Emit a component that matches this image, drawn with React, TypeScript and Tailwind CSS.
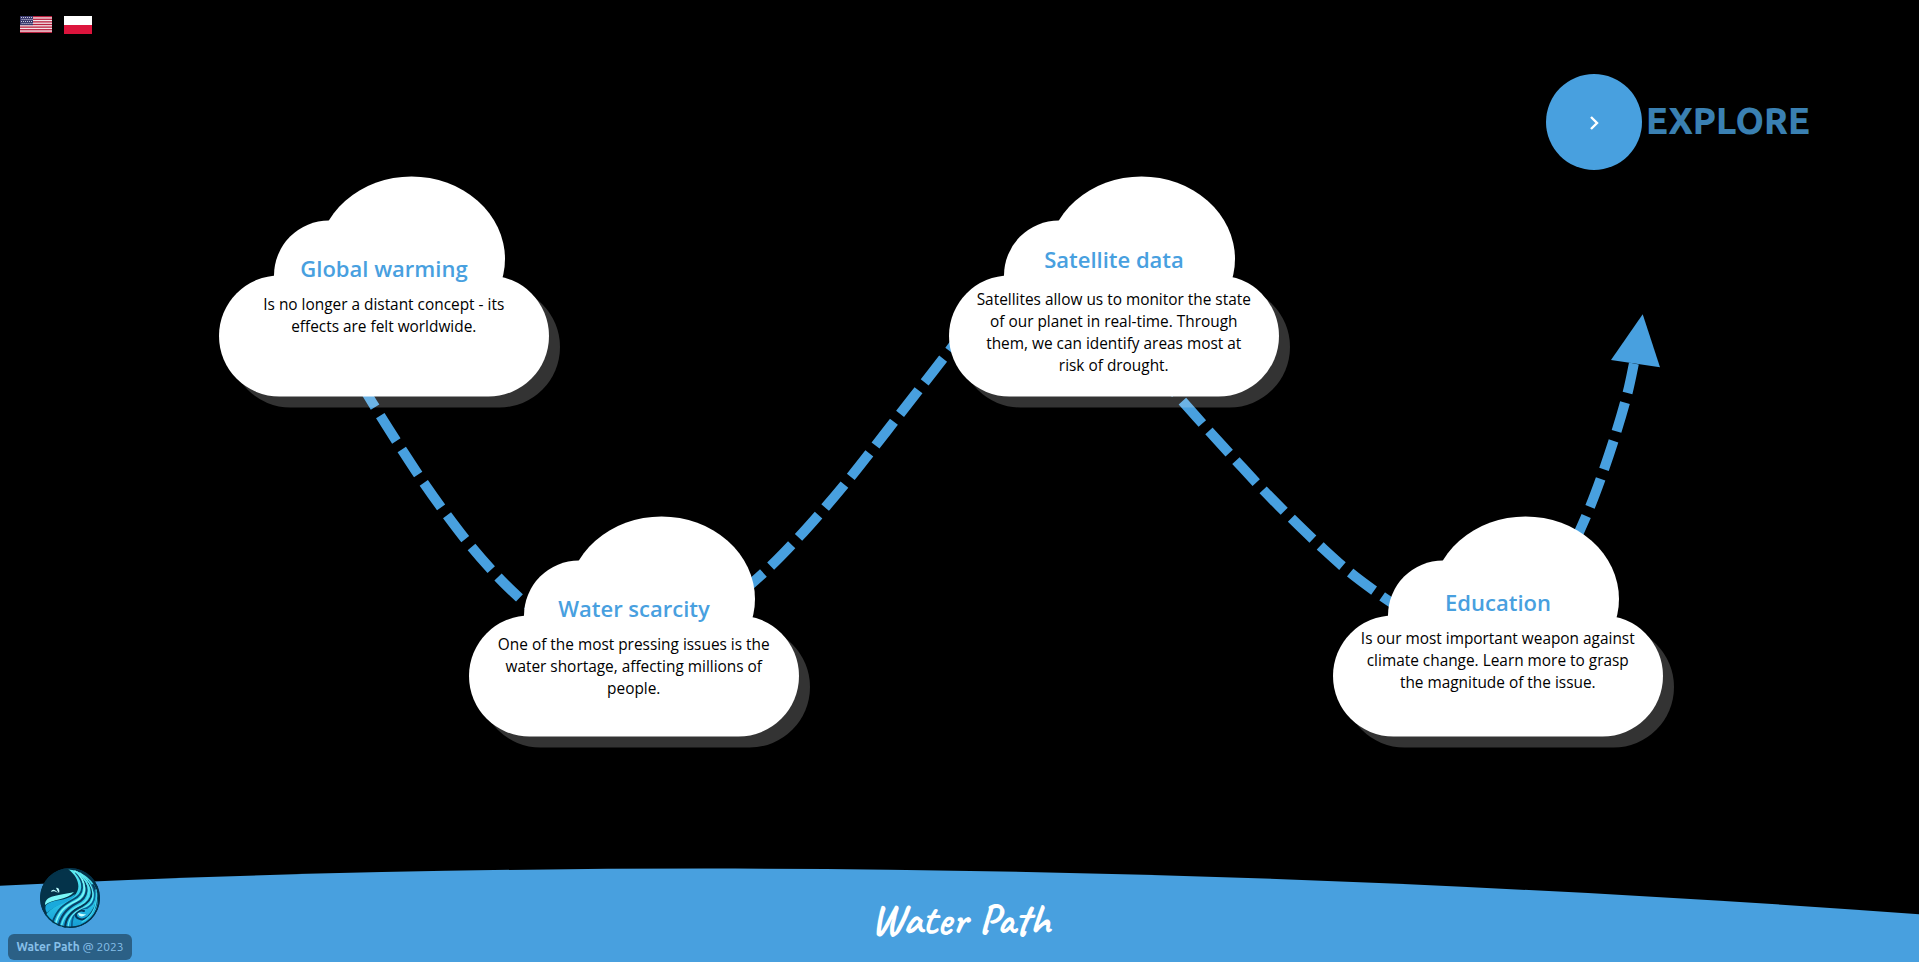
import React from "react";
import { ChevronRight } from "lucide-react";

type Point = [number, number];

/* Catmull-Rom spline through the given points, as an SVG path. */
function smoothPath(points: Point[]): string {
  let d = `M${points[0][0]},${points[0][1]}`;
  for (let i = 0; i < points.length - 1; i++) {
    const p0 = points[i - 1] ?? points[i];
    const p1 = points[i];
    const p2 = points[i + 1];
    const p3 = points[i + 2] ?? p2;
    d += `C${p1[0] + (p2[0] - p0[0]) / 6},${p1[1] + (p2[1] - p0[1]) / 6} ${p2[0] - (p3[0] - p1[0]) / 6},${p2[1] - (p3[1] - p1[1]) / 6} ${p2[0]},${p2[1]}`;
  }
  return d;
}

const trails: Point[][] = [
  [[359.5, 381.5], [380.3, 415.7], [401.7, 449.3], [423.7, 482.7], [447, 515.3], [471.3, 546.7], [497.8, 576.7], [519.2, 597.7], [530, 607]],
  [[741, 593], [770.5, 566.3], [798.3, 537.7], [825, 507.7], [850.7, 477], [875.5, 445.5], [900, 414], [924.7, 382.3], [949.3, 350.7], [967, 328]],
  [[1155.5, 371.5], [1182.3, 401], [1209, 431], [1235.9, 460.5], [1263.1, 489.9], [1291.4, 518.3], [1320.3, 546], [1350.3, 572.7], [1382.3, 596.5], [1400, 608]],
  [[1574, 543.5], [1590, 506.9], [1604, 469.3], [1616.7, 430.8], [1627.7, 392.3], [1634, 363]],
];

type CloudProps = {
  place: string;
  textTop: string;
  gap: string;
  title: string;
  lines: string[];
};

const clouds: CloudProps[] = [
  {
    place: "left-[219px] top-[176px]",
    textTop: "pt-[77px]",
    gap: "mt-[11px]",
    title: "Global warming",
    lines: ["Is no longer a distant concept - its", "effects are felt worldwide."],
  },
  {
    place: "left-[469px] top-[516px]",
    textTop: "pt-[77px]",
    gap: "mt-[11px]",
    title: "Water scarcity",
    lines: ["One of the most pressing issues is the", "water shortage, affecting millions of", "people."],
  },
  {
    place: "left-[949px] top-[176px]",
    textTop: "pt-[68px]",
    gap: "mt-[15px]",
    title: "Satellite data",
    lines: [
      "Satellites allow us to monitor the state",
      "of our planet in real-time. Through",
      "them, we can identify areas most at",
      "risk of drought.",
    ],
  },
  {
    place: "left-[1333px] top-[516px]",
    textTop: "pt-[71px]",
    gap: "mt-[11px]",
    title: "Education",
    lines: ["Is our most important weapon against", "climate change. Learn more to grasp", "the magnitude of the issue."],
  },
];

function Cloud({ place, textTop, gap, title, lines }: CloudProps) {
  return (
    <article className={`absolute h-[220px] w-[330px] ${place}`}>
      <svg className="absolute left-0 top-0 h-[232px] w-[342px]" viewBox="0 0 342 232">
        <rect x="11" y="110.5" width="330" height="121" rx="60.5" fill="#fff" fillOpacity="0.2" />
        <g fill="#fff">
          <rect y="99.5" width="330" height="121" rx="60.5" />
          <circle cx="110" cy="99.5" r="55" />
          <ellipse cx="192.5" cy="83" rx="93.5" ry="82.5" />
        </g>
      </svg>
      <div className={`relative text-center ${textTop}`}>
        <h2 className="text-[22px] font-semibold leading-[30px] text-[#48a0df]">{title}</h2>
        <p className={`whitespace-nowrap pr-[0.5px] text-[15.4px] leading-[22px] text-black ${gap}`}>
          {lines.map((line) => (
            <span key={line} className="block">{line}</span>
          ))}
        </p>
      </div>
    </article>
  );
}

function UsFlag() {
  return (
    <svg className="h-[17px] w-8" viewBox="0 0 32 17" preserveAspectRatio="none">
      <rect width="32" height="17" fill="#f4e6ea" />
      {[0, 1, 2, 3, 4, 5, 6].map((i) => (
        <rect key={i} y={i * 2.615} width="32" height="1.308" fill="#b9203f" />
      ))}
      <rect width="13" height="9.15" fill="#3c3b6e" />
      {[1, 3, 5, 7].map((y) =>
        [1, 3, 5, 7, 9, 11].map((x) => (
          <rect key={`${x}-${y}`} x={x + (y % 4 === 1 ? 0 : 0.6)} y={y} width="1" height="1" fill="#c9c8dc" />
        ))
      )}
    </svg>
  );
}

function PlFlag() {
  return (
    <svg className="h-[18px] w-7" viewBox="0 0 28 18">
      <rect width="28" height="9" fill="#fff" />
      <rect y="9" width="28" height="9" fill="#dc143c" />
    </svg>
  );
}

function Logo() {
  return (
    <svg className="size-[60px]" viewBox="0 0 60 60">
      <defs>
        <clipPath id="disc"><circle cx="30" cy="30" r="30" /></clipPath>
        <linearGradient id="sea" x1="0" y1="0" x2="0" y2="1">
          <stop offset="0" stopColor="#5eeef0" />
          <stop offset="0.5" stopColor="#2cc8ea" />
          <stop offset="1" stopColor="#1499d2" />
        </linearGradient>
      </defs>
      <g clipPath="url(#disc)">
        <rect width="60" height="60" fill="#04334a" />
        <path d="M28 1C45 4 58 15 58 31C58 44 50 55 38 58L26 61H10L4 50C10 38 26 34 34 28C41 22 40 10 28 1Z" fill="url(#sea)" />
        <g fill="none" strokeLinecap="round">
          <path d="M36 5C45 15 44 26 34 31C25 36 17 40 12 56" strokeWidth="1.8" stroke="#074c72" />
          <path d="M38 6C51 18 48 30 37 35C27 40 20 47 18 61" strokeWidth="2" stroke="#0a4166" />
          <path d="M42 8C57 20 53 32 42 38C31 43 25 50 25 61" strokeWidth="2" stroke="#063855" />
          <path d="M48 13C58 24 56 35 47 40C36 40 31 48 32 60" strokeWidth="1.8" stroke="#0b5f92" />
          <path d="M53 17C61 31 55 42 48 49C42 54 35 50 36 46C37 43 41 42 44 43" strokeWidth="2" stroke="#06395a" />
          <path d="M35 3C48 14 47 27 36 33C25 38 18 44 15 58" strokeWidth="1.6" stroke="#7cf8f6" />
          <path d="M37 4C54 17 51 31 40 37C29 42 22 49 21 61" strokeWidth="1.6" stroke="#58e6f2" />
          <path d="M40 5C58 20 55 34 45 39C34 43 28 50 28 61" strokeWidth="1.3" stroke="#66eef4" />
          <path d="M56 22C58 37 53 48 42 54" strokeWidth="1.4" stroke="#3ad3ee" />
        </g>
        <path d="M5 37C5 27 18 28 34 24C28 32 12 31 5 37Z" fill="#7af7f7" />
        <path d="M6 37C15 30 25 34 35 26C30 36 17 35 7 45C5 42 5 39 6 37Z" fill="#1aa9dc" />
        <path d="M38 45C39 50 44 49 46 46C42 47 41 45 38 45Z" fill="#caffff" />
        <path d="M11 24C12 20 16 22 18 25C15 23 13 23 11 24ZM16 20C19 19 20 23 19 25C17 23 17 21 16 20Z" fill="#baf8fa" />
        <circle cx="30" cy="30" r="29.3" fill="none" stroke="#04334a" strokeWidth="1.6" />
      </g>
    </svg>
  );
}

export default function App() {
  return (
    <div className="relative flex h-[962px] w-[1919px] flex-col justify-between overflow-hidden bg-black font-['Open_Sans','Noto_Sans',sans-serif]">
      <svg className="absolute inset-0 h-[962px] w-[1919px]" viewBox="0 0 1919 962">
        <g fill="none" stroke="#48a0df" strokeWidth="10" strokeDasharray="30 10">
          {trails.map((trail, i) => (
            <path key={i} d={smoothPath(trail)} />
          ))}
        </g>
        <path d="M1642.7 314.3L1611 360L1660 367.3Z" fill="#48a0df" />
      </svg>

      {clouds.map((cloud) => (
        <Cloud key={cloud.title} {...cloud} />
      ))}

      <header className="relative flex items-start justify-between pl-5 pr-[110px]">
        <nav className="flex items-start gap-3 pt-4">
          <UsFlag />
          <PlFlag />
        </nav>
        <a className="mt-[74px] flex h-24 items-center gap-[4px]">
          <span className="flex size-24 items-center justify-center rounded-full bg-[#48a0df]">
            <ChevronRight className="relative top-[1px] size-6 text-white" strokeWidth={2.4} strokeLinecap="butt" strokeLinejoin="miter" />
          </span>
          <span className="w-[163px] whitespace-nowrap pb-[2px] font-['Ubuntu','Open_Sans',sans-serif] text-[36px] font-extrabold leading-[48px] text-[#3a80b2]">EXPLORE</span>
        </a>
      </header>

      <footer className="relative h-[94px]">
        <svg className="absolute inset-0 h-[94px] w-[1919px]" viewBox="0 868 1919 94">
          <path d="M0 885.7C640 854.1 1279 867.7 1919 914.2V962H0Z" fill="#48a0df" />
        </svg>
        <div className="relative grid h-full grid-cols-3">
          <div className="flex flex-col items-start gap-[6px] pl-2">
            <div className="pl-8">
              <Logo />
            </div>
            <div className="flex h-[26px] w-[124px] shrink-0 items-center justify-center whitespace-nowrap rounded-md bg-[#2b6086] font-['Ubuntu','Open_Sans',sans-serif] text-[12px] text-[#86bfe8]">
              <span><b>Water Path</b> @ 2023</span>
            </div>
          </div>
          <div className="flex justify-center pl-[2px] pt-[28px]">
            <span className="whitespace-nowrap font-['Caveat','Lato',cursive] text-[44px] font-bold leading-[48px] text-white">Water Path</span>
          </div>
        </div>
      </footer>
    </div>
  );
}
